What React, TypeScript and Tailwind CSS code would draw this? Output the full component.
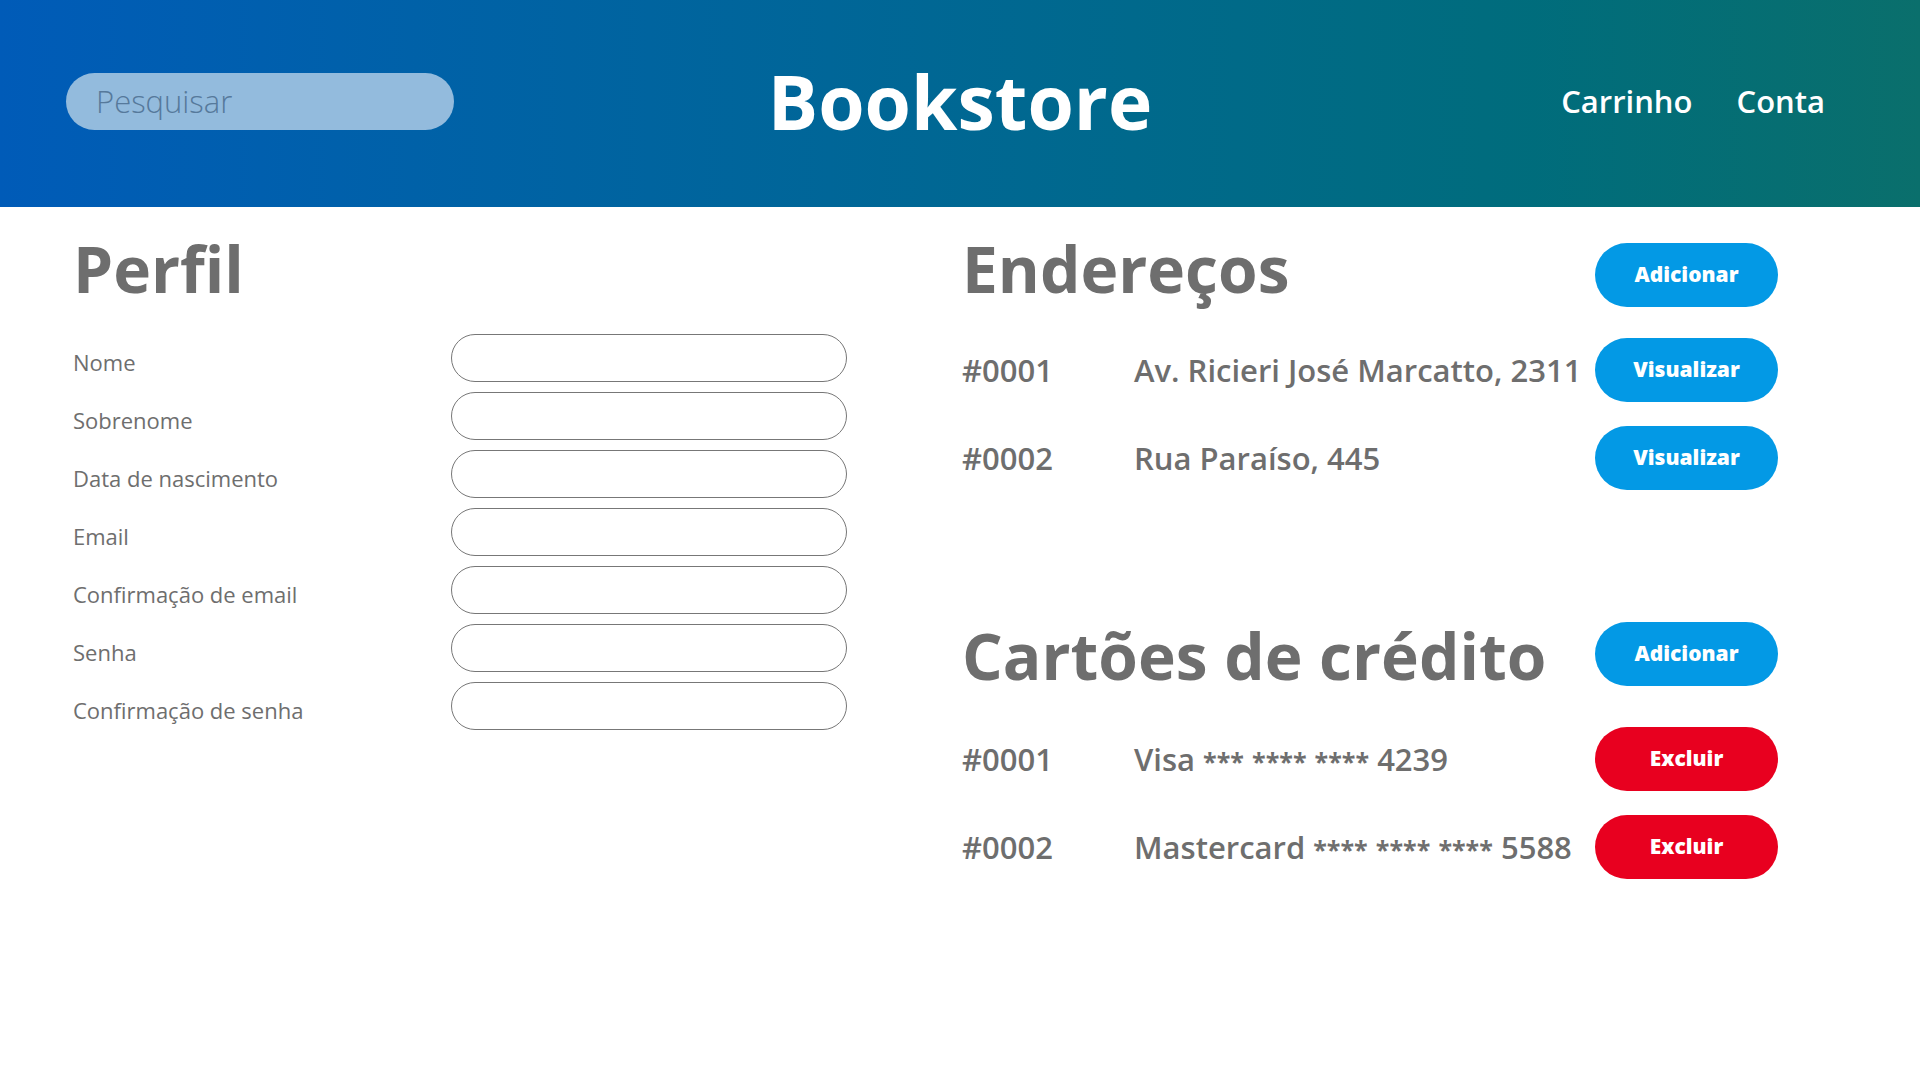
import React from "react";

const font = { fontFamily: '"Open Sans", "Liberation Sans", sans-serif' };

const fields = [
  "Nome",
  "Sobrenome",
  "Data de nascimento",
  "Email",
  "Confirmação de email",
  "Senha",
  "Confirmação de senha",
];

function Btn({ label, red, cls = "" }: { label: string; red?: boolean; cls?: string }) {
  return (
    <button
      className={
        "ml-auto flex h-[64px] w-[183px] shrink-0 items-center justify-center rounded-full text-[21px] font-extrabold text-white " +
        (red ? "bg-[#e8001f] " : "bg-[#0399e5] ") +
        cls
      }
    >
      {label}
    </button>
  );
}

function Row({ id, text, btn, red }: { id: string; text: React.ReactNode; btn: string; red?: boolean }) {
  return (
    <div className="flex items-center">
      <div className="w-[172px] text-[31px] font-semibold text-[#6e6e6e]">{id}</div>
      <div className="text-[31px] font-semibold text-[#6e6e6e] whitespace-nowrap">{text}</div>
      <Btn label={btn} red={red} />
    </div>
  );
}

function Stars({ s }: { s: string }) {
  return <span className="text-[25px] font-bold">{s}</span>;
}

export default function App() {
  return (
    <div className="min-h-[1080px] w-[1920px] bg-white" style={font}>
      <header className="grid h-[207px] grid-cols-3 items-center bg-gradient-to-r from-[#005bb8] to-[#0a6f6c] pb-[4px]">
        <div className="pl-[66px]">
          <div className="flex h-[57px] w-[388px] items-center rounded-full bg-[#93bbdd] pl-[30px] text-[31px] font-light text-[#56799b]">
            Pesquisar
          </div>
        </div>
        <div className="text-center text-[75px] font-bold text-white leading-none">Bookstore</div>
        <div className="flex items-center justify-end gap-[44px] pr-[95px] text-[31px] font-semibold text-white">
          <span>Carrinho</span>
          <span>Conta</span>
        </div>
      </header>

      <main className="flex pt-[30px]">
        <section className="w-[962px] pl-[73px]">
          <h1 className="text-[64px] font-bold leading-[64px] text-[#6e6e6e]">Perfil</h1>
          <div className="mt-[33px] flex flex-col gap-[10px]">
            {fields.map((f) => (
              <div key={f} className="flex items-center">
                <label className="w-[378px] pt-[8px] text-[22px] text-[#6e6e6e]">{f}</label>
                <div className="h-[48px] w-[396px] rounded-full border border-[#777777]" />
              </div>
            ))}
          </div>
        </section>

        <section className="w-[816px]">
          <div className="flex items-start">
            <h2 className="text-[64px] font-bold leading-[64px] text-[#6e6e6e]">Endereços</h2>
            <Btn label="Adicionar" cls="mt-[6px]" />
          </div>
          <div className="mt-[31px] flex flex-col gap-[24px]">
            <Row id="#0001" text="Av. Ricieri José Marcatto, 2311" btn="Visualizar" />
            <Row id="#0002" text="Rua Paraíso, 445" btn="Visualizar" />
          </div>

          <div className="mt-[132px] flex items-start">
            <h2 className="mt-[2px] text-[64px] font-bold leading-[64px] text-[#6e6e6e]">Cartões de crédito</h2>
            <Btn label="Adicionar" />
          </div>
          <div className="mt-[39px] flex flex-col gap-[24px]">
            <Row
              id="#0001"
              text={
                <>
                  Visa <Stars s="***" /> <Stars s="****" /> <Stars s="****" /> 4239
                </>
              }
              btn="Excluir"
              red
            />
            <Row
              id="#0002"
              text={
                <>
                  Mastercard <Stars s="****" /> <Stars s="****" /> <Stars s="****" /> 5588
                </>
              }
              btn="Excluir"
              red
            />
          </div>
        </section>
      </main>
    </div>
  );
}
